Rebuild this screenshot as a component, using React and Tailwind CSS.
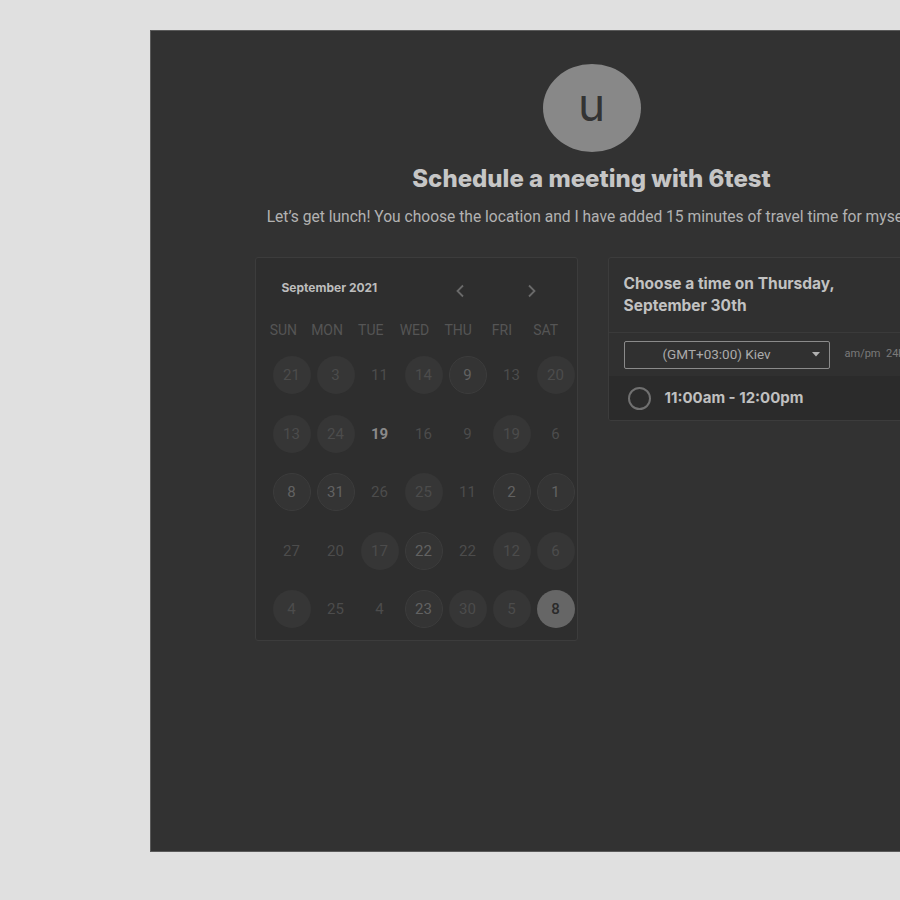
import React from "react";

const rows = [
  [["21", "c"], ["3", "c"], ["11", ""], ["14", "c"], ["9", "t"], ["13", ""], ["20", "c"]],
  [["13", "c"], ["24", "c"], ["19", "b"], ["16", ""], ["9", ""], ["19", "c"], ["6", ""]],
  [["8", "t"], ["31", "t"], ["26", ""], ["25", "c"], ["11", ""], ["2", "t"], ["1", "t"]],
  [["27", ""], ["20", ""], ["17", "c"], ["22", "t"], ["22", ""], ["12", "c"], ["6", "c"]],
  [["4", "c"], ["25", ""], ["4", ""], ["23", "t"], ["30", "c"], ["5", "c"], ["8", "s"]],
];

function Day({ n, k }) {
  let cls = "text-[#4c4c4c]";
  if (k === "c") cls = "bg-[#363636] text-[#4c4c4c]";
  if (k === "t") cls = "bg-[#343434] text-[#626262] border border-[#3c3c3c]";
  if (k === "b") cls = "text-[#8a8a8a] font-bold";
  if (k === "s") cls = "bg-[#666666] text-[#2a2a2a] font-medium";
  return (
    <div className="flex h-[58.5px] items-center justify-center">
      <div className={`flex h-[38px] w-[38px] items-center justify-center rounded-full text-[15px] ${cls}`}>{n}</div>
    </div>
  );
}

export default function App() {
  return (
    <div className="min-h-screen w-full overflow-hidden bg-[#e0e0e0] pl-[150px] pt-[30px]" style={{ height: 900 }}>
      <div
        className="flex h-[822px] w-[882px] flex-col items-center border-t border-l border-b border-[#5a5a5a] bg-[#323232]"
        style={{ fontFamily: "Roboto, 'Liberation Sans', sans-serif" }}
      >
        <div className="mt-[33px] flex h-[88px] w-[98px] items-center justify-center rounded-[50%] bg-[#888888]">
          <span className="mt-[-9px] text-[46px] leading-none text-[#333333]" style={{ fontFamily: "Inter, sans-serif" }}>u</span>
        </div>
        <h1
          className="mt-[12px] text-[24px] font-extrabold leading-[30px] text-[#c6c6c6]"
          style={{ fontFamily: "Inter, sans-serif" }}
        >
          Schedule a meeting with 6test
        </h1>
        <p className="mt-[13px] whitespace-nowrap text-[15.6px] leading-[20px] text-[#b2b2b2]">
          Let’s get lunch! You choose the location and I have added 15 minutes of travel time for myself.
        </p>
        <div className="mt-[30px] flex gap-[30px]">
          <div className="h-[384px] w-[323px] rounded-[3px] border border-[#3c3c3c] bg-[#2e2e2e]">
            <div className="flex h-[60px] items-center pl-[26px] pr-[40px] pt-[0px]">
              <span className="text-[12px] font-bold text-[#bdbdbd]" style={{ fontFamily: "Inter, sans-serif" }}>
                September 2021
              </span>
              <div className="ml-auto mt-[6px] flex items-center gap-[62px] text-[#6a6a6a]">
                <svg width="10" height="14" viewBox="0 0 10 14" fill="none" stroke="currentColor" strokeWidth="1.8">
                  <path d="M8 1.5 L2.5 7 L8 12.5" />
                </svg>
                <svg width="10" height="14" viewBox="0 0 10 14" fill="none" stroke="currentColor" strokeWidth="1.8">
                  <path d="M2 1.5 L7.5 7 L2 12.5" />
                </svg>
              </div>
            </div>
            <div className="grid grid-cols-7 pl-[6px] pr-[9px] text-[14px] leading-[24px] text-[#555555]">
              {["SUN", "MON", "TUE", "WED", "THU", "FRI", "SAT"].map((d) => (
                <div key={d} className="text-center">{d}</div>
              ))}
            </div>
            <div className="mt-[4px] ml-[14px] grid w-[308px] grid-cols-7">
              {rows.flat().map(([n, k], i) => (
                <Day key={i} n={n} k={k} />
              ))}
            </div>
          </div>
          <div className="h-[164px] w-[321px] overflow-hidden rounded-[3px] border border-[#3c3c3c] bg-[#303030]">
            <div
              className="h-[75px] border-b border-[#3a3a3a] pl-[15px] pt-[15px] text-[15.5px] font-bold leading-[22px] text-[#c2c2c2]"
              style={{ fontFamily: "Inter, sans-serif" }}
            >
              Choose a time on Thursday,
              <br />
              September 30th
            </div>
            <div className="flex h-[43px] items-center pl-[15px]">
              <div className="flex h-[28px] w-[206px] items-center rounded-[2px] border border-[#8a8a8a] pl-[38px] pr-[9px] text-[13.5px] text-[#ababab]">
                <span>(GMT+03:00) Kiev</span>
                <svg className="ml-auto" width="8" height="5" viewBox="0 0 8 5">
                  <path d="M0 0 L8 0 L4 4.5 Z" fill="#b0b0b0" />
                </svg>
              </div>
              <span className="ml-[15px] whitespace-nowrap text-[11px] text-[#7a7a7a]">am/pm&nbsp;&nbsp;24h</span>
            </div>
            <div className="flex h-[44px] items-center bg-[#2b2b2b] pl-[19px]">
              <div className="h-[23px] w-[23px] rounded-full border-2 border-[#707070]" />
              <span
                className="ml-[14px] text-[15px] font-bold text-[#c0c0c0]"
                style={{ fontFamily: "Inter, sans-serif" }}
              >
                11:00am - 12:00pm
              </span>
            </div>
          </div>
        </div>
      </div>
    </div>
  );
}
